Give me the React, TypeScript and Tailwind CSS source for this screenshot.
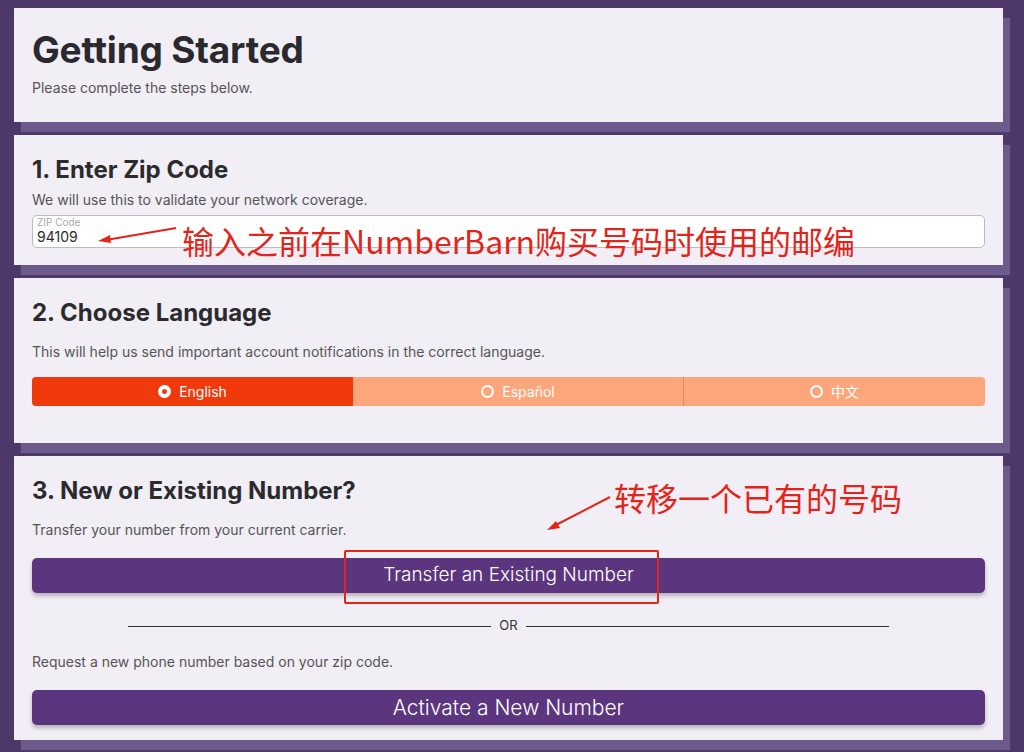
import React from 'react';

const Card: React.FC<{ className?: string; children: React.ReactNode }> = ({ className = '', children }) => (
  <div className={`bg-[#f1eef5] px-[18px] shadow-[7px_10px_1px_#6c5a8c] ${className}`}>{children}</div>
);

const Radio: React.FC<{ on?: boolean }> = ({ on }) => (
  <span className="inline-flex h-[13px] w-[13px] items-center justify-center rounded-full border-2 border-white bg-transparent">
    {on && <span className="h-[13px] w-[13px] rounded-full bg-white flex items-center justify-center"><span className="h-[5px] w-[5px] rounded-full bg-[#f03a0c]" /></span>}
  </span>
);

const App: React.FC = () => {
  return (
    <div className="relative min-h-[752px] w-[1024px] bg-[#4d3869] pt-2 pb-3 pl-[14px] pr-[21px] font-['Inter',sans-serif] text-[#2b2b2e] overflow-hidden">
      <div className="flex flex-col gap-[13px]">
        <Card className="h-[114px] pt-[20px]">
          <h1 className="text-[37px] leading-[44px] font-bold tracking-[-0.2px] text-[#2a2a2e]">Getting Started</h1>
          <p className="mt-[6px] text-[14px] leading-[20px] text-[#555]">Please complete the steps below.</p>
        </Card>

        <Card className="h-[130px] pt-[21px]">
          <h2 className="text-[24px] leading-[28px] font-bold">1. Enter Zip Code</h2>
          <p className="mt-[6px] text-[14px] leading-[20px] text-[#555]">We will use this to validate your network coverage.</p>
          <div className="mt-[5px] h-[33px] rounded-[5px] border border-[#bdbbc2] bg-white px-[4px] pt-[1px]">
            <div className="text-[10px] leading-[11px] text-[#a9a7ad]">ZIP Code</div>
            <div className="text-[14px] leading-[18px] text-[#2a2a2a]">94109</div>
          </div>
        </Card>

        <Card className="h-[165px] pt-[21px]">
          <h2 className="text-[24px] leading-[28px] font-bold">2. Choose Language</h2>
          <p className="mt-[15px] text-[14px] leading-[20px] text-[#555]">This will help us send important account notifications in the correct language.</p>
          <div className="mt-[15px] flex h-[29px] overflow-hidden rounded-[4px] text-[14px] text-white">
            <div className="flex w-[321px] items-center justify-center gap-[8px] bg-[#f03a0c]">
              <Radio on />
              <span>English</span>
            </div>
            <div className="flex w-[331px] items-center justify-center gap-[8px] bg-[#fda67c] border-r border-[#d58e68]">
              <Radio />
              <span>Español</span>
            </div>
            <div className="flex flex-1 items-center justify-center gap-[8px] bg-[#fda67c]">
              <Radio />
              <span className="font-['Noto_Sans_CJK_SC',sans-serif]">中文</span>
            </div>
          </div>
        </Card>

        <Card className="h-[284px] pt-[21px]">
          <h2 className="text-[24px] leading-[28px] font-bold">3. New or Existing Number?</h2>
          <p className="mt-[15px] text-[14px] leading-[20px] text-[#555]">Transfer your number from your current carrier.</p>
          <button className="mt-[18px] flex h-[35px] w-full items-center justify-center rounded-[5px] bg-[#5b357d] text-[19px] font-light text-white shadow-[0_3px_4px_rgba(0,0,0,0.25)]">
            Transfer an Existing Number
          </button>
          <div className="mt-[23px] flex h-[20px] items-center justify-center gap-[8px] text-[13px] text-[#333]">
            <div className="h-px w-[363px] bg-[#333]" />
            <span>OR</span>
            <div className="h-px w-[363px] bg-[#333]" />
          </div>
          <p className="mt-[16px] text-[14px] leading-[20px] text-[#555]">Request a new phone number based on your zip code.</p>
          <button className="mt-[18px] flex h-[35px] w-full items-center justify-center rounded-[5px] bg-[#5b357d] text-[21px] font-light text-white shadow-[0_3px_4px_rgba(0,0,0,0.25)]">
            Activate a New Number
          </button>
        </Card>
      </div>

      {/* annotations */}
      <svg className="absolute left-0 top-0 pointer-events-none" width="1024" height="752">
        <line x1="176" y1="228" x2="106" y2="240" stroke="#e3241b" strokeWidth="2" />
        <polygon points="98,241 110,235 111,243" fill="#e3241b" />
        <line x1="610" y1="497" x2="554" y2="526" stroke="#e3241b" strokeWidth="2" />
        <polygon points="547,530 556,521 560,528" fill="#e3241b" />
      </svg>
      <div className="absolute left-[182px] top-[221px] text-[32px] leading-[38px] text-[#e3241b] font-['Noto_Sans_CJK_SC',sans-serif] whitespace-nowrap">
        输入之前在NumberBarn购买号码时使用的邮编
      </div>
      <div className="absolute left-[614px] top-[478px] text-[32px] leading-[38px] text-[#e3241b] font-['Noto_Sans_CJK_SC',sans-serif] whitespace-nowrap">
        转移一个已有的号码
      </div>
      <div className="absolute left-[344px] top-[550px] h-[54px] w-[315px] border-2 border-[#e3241b] rounded-[2px]" />
    </div>
  );
};

export default App;
